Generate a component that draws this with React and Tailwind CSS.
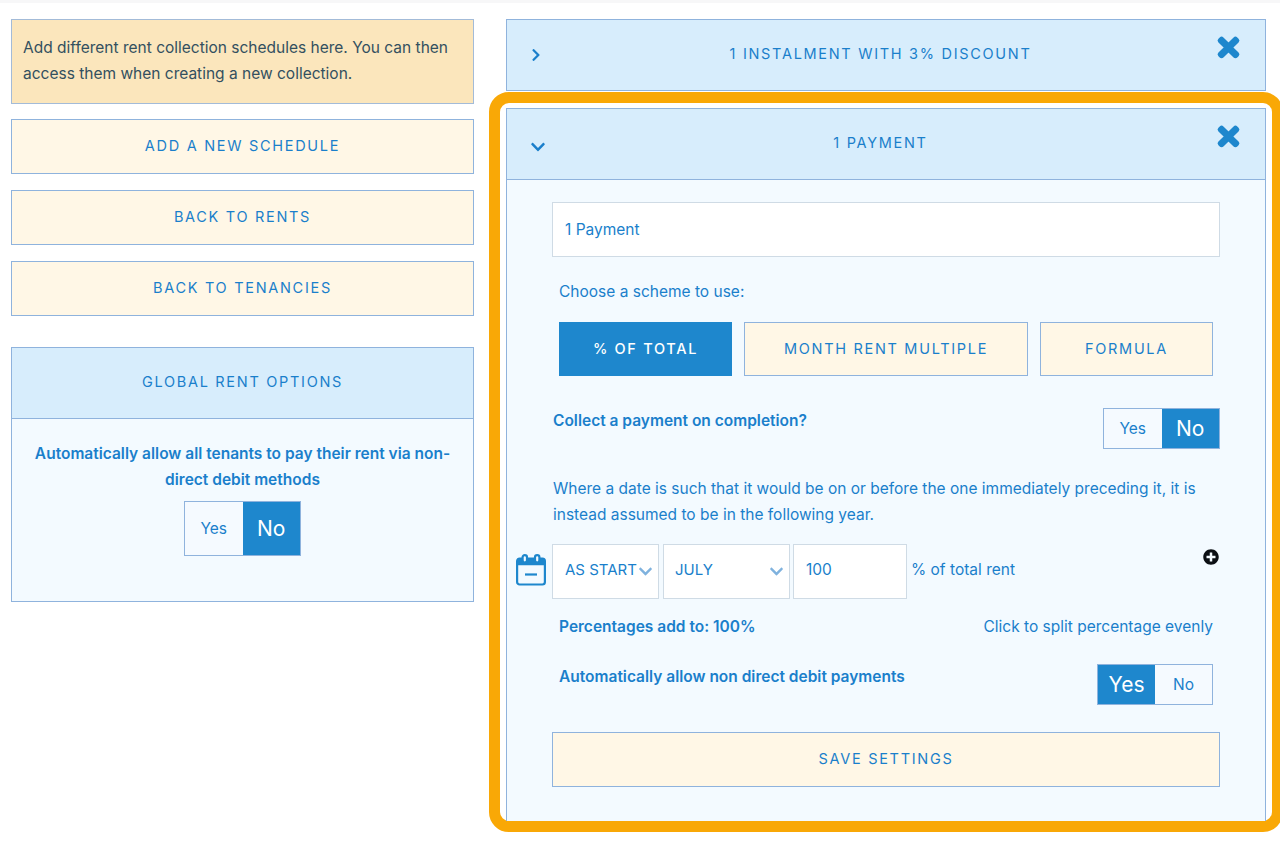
import React from 'react';
import { FaTimes, FaChevronRight, FaChevronDown, FaPlusCircle } from 'react-icons/fa';

const font = "font-['Inter','Noto_Sans',sans-serif]";

const WideButton = ({ label, className = '' }) => (
  <button className={`flex items-center justify-center pb-[2px] bg-[#fff7e6] border border-[#8fb3dd] text-[#1a7fcb] text-[14.5px] tracking-[1.7px] uppercase ${className}`}>
    {label}
  </button>
);

const Toggle = ({ active, className = '' }) => (
  <div className={`flex border border-[#8fb3dd] ${className}`}>
    <div className={`w-1/2 flex items-center justify-center ${active === 'Yes' ? 'bg-[#1e87cd] text-white text-[21px]' : 'bg-[#f5faff] text-[#1a7fcb] text-[15.5px]'}`}>Yes</div>
    <div className={`w-1/2 flex items-center justify-center ${active === 'No' ? 'bg-[#1e87cd] text-white text-[21px]' : 'bg-[#f5faff] text-[#1a7fcb] text-[15.5px]'}`}>No</div>
  </div>
);

const AccordionHeader = ({ title, open, className = '' }) => (
  <div className={`relative flex items-center justify-center pb-[2px] pr-[11px] h-[72px] bg-[#d7edfc] border border-[#8fb3dd] text-[#1a7fcb] text-[14.5px] tracking-[1.7px] uppercase ${className}`}>
    {open
      ? <FaChevronDown size={16} className="absolute left-[23px] top-[30px] text-[#1a7fcb]" />
      : <FaChevronRight size={14} className="absolute left-[22px] top-[28px] text-[#1a7fcb]" />}
    {title}
    <FaTimes size={29} className="absolute right-[22px] top-[13px] text-[#1e87cd] stroke-[#1e87cd] stroke-[30px]" />
  </div>
);

const Select = ({ value, className = '' }) => (
  <div className={`flex items-center justify-between h-[55px] pb-[3px] bg-white border border-[#cfdbe5] text-[15px] whitespace-nowrap text-[#1a7fcb] ${className}`}>
    {value}
    <FaChevronDown size={15} className="text-[#7fb2de] shrink-0 mt-[3px]" />
  </div>
);

const CalendarIcon = () => (
  <svg width="30" height="32" viewBox="0 0 30 32" fill="none" stroke="#1e87cd" strokeWidth="2.2">
    <rect x="1.1" y="4.5" width="27.8" height="26" rx="2.5" />
    <path d="M1.1 8h27.8" strokeWidth="6.5" />
    <rect x="6.6" y="1.1" width="4.4" height="7.4" rx="2.2" fill="#f3faff" />
    <rect x="19" y="1.1" width="4.4" height="7.4" rx="2.2" fill="#f3faff" />
    <path d="M9 20.5h12" />
  </svg>
);

export default function App() {
  return (
    <div className={`w-[1280px] h-[841px] overflow-hidden bg-white ${font}`}>
      <div className="h-[3px] bg-[#f7f7f8]" />
      <div className="flex">
        <div className="w-[463px] shrink-0 ml-[11px] pt-[16px] flex flex-col">
          <div className="h-[85px] px-[11px] pt-[15px] bg-[#fbe6bc] border border-[#a3bbd8] text-[15.5px] leading-[25.5px] text-[#33505f]">
            Add different rent collection schedules here. You can then access them when creating a new collection.
          </div>
          <WideButton label="Add a new schedule" className="h-[55px] mt-[15px]" />
          <WideButton label="Back to rents" className="h-[55px] mt-[16px]" />
          <WideButton label="Back to tenancies" className="h-[55px] mt-[16px]" />
          <div className="h-[255px] mt-[31px] bg-[#f3faff] border border-[#8fb3dd]">
            <div className="h-[71px] flex items-center justify-center pb-[2px] bg-[#d7edfc] border-b border-[#8fb3dd] text-[#1a7fcb] text-[14.5px] tracking-[1.7px] uppercase">
              Global rent options
            </div>
            <div className="px-[22px] pt-[22px] flex flex-col items-center text-center">
              <p className="text-[15.5px] leading-[25.5px] font-semibold text-[#1a7fcb]">
                Automatically allow all tenants to pay their rent via non-direct debit methods
              </p>
              <Toggle active="No" className="w-[117px] h-[55px] mt-[9px]" />
            </div>
          </div>
        </div>

        <div className="w-[794px] shrink-0 ml-[15px] pt-[16px]">
          <AccordionHeader title="1 instalment with 3% discount" className="ml-[17px] w-[760px] mb-px" />
          <div className="h-[740px] border-[11px] border-[#f9a806] rounded-[20px] pt-[5px] px-[6px]">
            <AccordionHeader title="1 Payment" open />
            <div className="h-[641px] px-[45px] pt-[22px] bg-[#f3faff] border-x border-[#8fb3dd] text-[#1a7fcb] text-[15.5px]">
              <div className="h-[55px] flex items-center pl-[12px] bg-white border border-[#cfdbe5]">1 Payment</div>
              <p className="mt-[25px] ml-[7px] leading-[20px]">Choose a scheme to use:</p>
              <div className="flex gap-[12px] mt-[20px] mx-[7px]">
                <button className="w-[173px] h-[54px] flex items-center justify-center bg-[#1e87cd] text-white font-medium text-[14.5px] tracking-[1.7px] uppercase">% of total</button>
                <WideButton label="Month rent multiple" className="w-[284px] h-[54px] pt-[2px]" />
                <WideButton label="Formula" className="w-[173px] h-[54px] pt-[2px]" />
              </div>
              <div className="flex items-start justify-between mt-[32px]">
                <p className="mt-[3px] ml-px leading-[20px] font-semibold">Collect a payment on completion?</p>
                <Toggle active="No" className="w-[117px] h-[41px]" />
              </div>
              <p className="mt-[27px] ml-px leading-[26px]">
                Where a date is such that it would be on or before the one immediately preceding it, it is instead assumed to be in the following year.
              </p>
              <div className="relative flex items-center gap-[3px] mt-[16px] -ml-[36px]">
                <div className="w-[30px] mr-[3px] -mt-[3px]"><CalendarIcon /></div>
                <Select value="AS START" className="w-[107px] pl-[12px] pr-[5px]" />
                <Select value="JULY" className="w-[127px] ml-px pl-[11px] pr-[5px]" />
                <div className="w-[114px] h-[55px] flex items-center pl-[12px] pb-[3px] bg-white border border-[#cfdbe5]">100</div>
                <span className="ml-px pb-[3px]">% of total rent</span>
                <FaPlusCircle size={16} className="absolute right-px top-[5px] text-[#0b0f14]" />
              </div>
              <div className="flex justify-between mt-[18px] mx-[7px] leading-[20px]">
                <span className="font-semibold">Percentages add to: 100%</span>
                <span>Click to split percentage evenly</span>
              </div>
              <div className="flex items-start justify-between mt-[27px] mx-[7px]">
                <p className="mt-[3px] leading-[20px] font-semibold">Automatically allow non direct debit payments</p>
                <Toggle active="Yes" className="w-[116px] h-[41px]" />
              </div>
              <WideButton label="Save settings" className="w-full h-[55px] mt-[27px]" />
            </div>
          </div>
        </div>
      </div>
    </div>
  );
}
